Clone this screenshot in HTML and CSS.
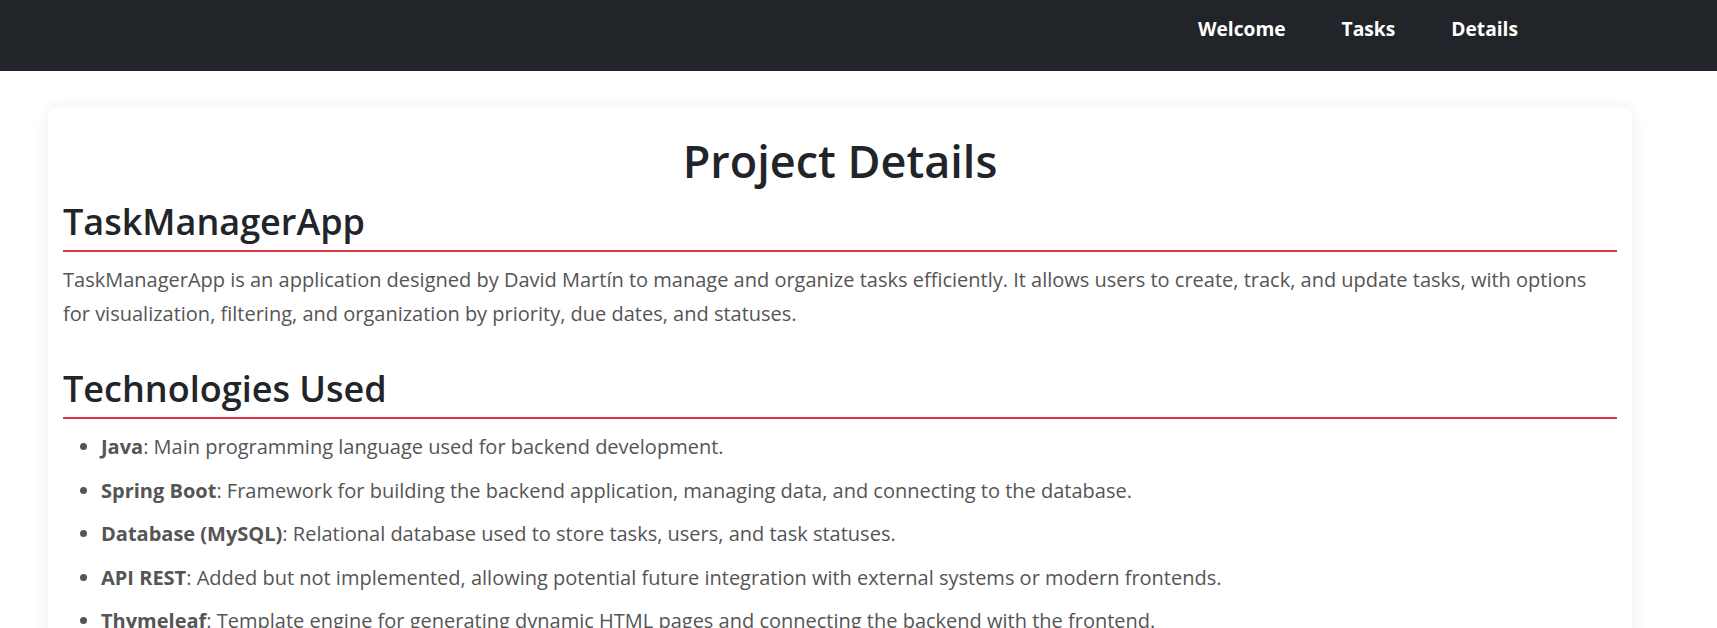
FILE: index.html
```html
<!DOCTYPE html>
<html lang="en">
<head>
<meta charset="utf-8">
<title>Project Details</title>
<link rel="stylesheet" href="styles.css">
</head>
<body>
<nav class="navbar">
  <ul class="nav-links">
    <li><a href="#" class="nav-link">Welcome</a></li>
    <li><a href="#" class="nav-link">Tasks</a></li>
    <li><a href="#" class="nav-link">Details</a></li>
  </ul>
</nav>
<main class="page">
  <section class="card">
    <h1 class="page-title">Project Details</h1>
    <h2 class="section-title">TaskManagerApp</h2>
    <p class="section-text">TaskManagerApp is an application designed by David Martín to manage and organize tasks efficiently. It allows users to create, track, and update tasks, with options for visualization, filtering, and organization by priority, due dates, and statuses.</p>
    <h2 class="section-title section-gap">Technologies Used</h2>
    <ul class="tech-list">
      <li><strong>Java</strong>: Main programming language used for backend development.</li>
      <li><strong>Spring Boot</strong>: Framework for building the backend application, managing data, and connecting to the database.</li>
      <li><strong>Database (MySQL)</strong>: Relational database used to store tasks, users, and task statuses.</li>
      <li><strong>API REST</strong>: Added but not implemented, allowing potential future integration with external systems or modern frontends.</li>
      <li><strong>Thymeleaf</strong>: Template engine for generating dynamic HTML pages and connecting the backend with the frontend.</li>
    </ul>
  </section>
</main>
</body>
</html>
```

FILE: styles.css
```css
* { box-sizing: border-box; }

html, body {
  margin: 0;
  padding: 0;
  background: #ffffff;
  font-family: "Open Sans", "Noto Sans", "Liberation Sans", sans-serif;
  color: #555555;
}

.navbar {
  background: #212529;
  height: 71px;
  padding: 17px 199px 0 0;
  display: flex;
  justify-content: flex-end;
}

.nav-links {
  list-style: none;
  margin: 0;
  padding: 0;
  display: flex;
  gap: 56px;
}

.nav-link {
  color: #ffffff;
  text-decoration: none;
  font-weight: 700;
  font-size: 19.2px;
  line-height: 24px;
  display: block;
}

.page {
  padding: 36px 85px 0 48px;
}

.card {
  background: #ffffff;
  border-radius: 10px;
  box-shadow: 0 0 16px rgba(0, 0, 0, 0.07);
  padding: 24px 15px 20px 15px;
}

.page-title {
  margin: 0 0 7px;
  text-align: center;
  font-size: 45px;
  line-height: 60px;
  font-weight: 600;
  color: #212529;
}

.section-title {
  margin: 0 0 11px;
  padding-bottom: 4px;
  border-bottom: 2px solid #dc3545;
  font-size: 36px;
  line-height: 48px;
  font-weight: 600;
  color: #212529;
}

.section-gap {
  margin-top: 34px;
}

.section-text {
  margin: 0;
  padding-right: 4px;
  font-size: 20px;
  line-height: 34px;
}

.tech-list {
  margin: 0;
  padding-left: 38px;
  font-size: 20px;
  line-height: 34px;
}

.tech-list li {
  margin-bottom: 9.5px;
}

.tech-list strong {
  font-weight: 700;
}
```
